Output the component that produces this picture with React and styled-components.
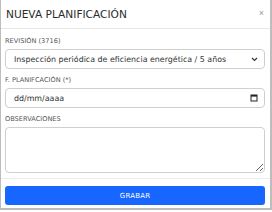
import React from "react";
import styled, { createGlobalStyle } from "styled-components";

const GlobalStyle = createGlobalStyle`
  * { box-sizing: border-box; }
  body {
    margin: 0;
    background: #ffffff;
    font-family: "DejaVu Sans", "Noto Sans", sans-serif;
    color: #333333;
  }
`;

const Modal = styled.div`
  width: 272px;
  height: 210px;
  border-left: 1px solid #bdbdbd;
  border-right: 2px solid #bdbdbd;
  border-bottom: 2px solid #bdbdbd;
  background: #fff;
  display: flex;
  flex-direction: column;
`;

const Header = styled.div`
  flex-shrink: 0;
  height: 29px;
  display: flex;
  align-items: center;
  justify-content: space-between;
  padding: 0 6px 1px 5px;
  border-bottom: 1px solid #e6e6e6;
`;

const Title = styled.h2`
  margin: 0;
  font-size: 10.6px;
  font-weight: 400;
  color: #2b2b2b;
`;

const Close = styled.button`
  border: none;
  background: none;
  padding: 0;
  font-size: 9px;
  color: #999;
  line-height: 1;
  cursor: pointer;
`;

const Body = styled.div`
  flex: 1;
  min-height: 0;
  padding: 8px 5px 0 4px;
  display: flex;
  flex-direction: column;
  border-bottom: 1px solid #ececec;
`;

const Field = styled.div`
  display: flex;
  flex-direction: column;
  margin-bottom: ${(p) => p.$gap ?? 7}px;
`;

const Label = styled.label`
  font-size: 6.6px;
  color: #555;
  margin-bottom: 4px;
`;

const Control = styled.div`
  height: 20px;
  border: 1px solid #cfcfcf;
  border-radius: 4px;
  display: flex;
  align-items: center;
  justify-content: space-between;
  padding: 0 6px 0 8px;
  font-size: 7.9px;
  color: #333;
`;

const TextArea = styled.textarea`
  height: 46px;
  border: 1px solid #cfcfcf;
  border-radius: 4px;
  resize: vertical;
  font-family: inherit;
  font-size: 9px;
  outline: none;
`;

const Footer = styled.div`
  flex-shrink: 0;
  padding: 7px 5px 3px 4px;
`;

const Button = styled.button`
  display: block;
  width: 100%;
  height: 19px;
  border: none;
  border-radius: 3px;
  background: #1766ff;
  color: #fff;
  font-family: inherit;
  font-size: 7px;
  letter-spacing: 0.2px;
`;

const Chevron = () => (
  <svg width="7" height="5" viewBox="0 0 7 5">
    <path d="M1 1l2.5 2.5L6 1" fill="none" stroke="#333" strokeWidth="1.2" />
  </svg>
);

const Calendar = () => (
  <svg width="8" height="8" viewBox="0 0 8 8">
    <rect x="1" y="1" width="6" height="6" fill="none" stroke="#222" strokeWidth="1" />
    <rect x="1" y="1" width="6" height="1.6" fill="#222" />
  </svg>
);

export default function App() {
  return (
    <>
      <GlobalStyle />
      <Modal>
        <Header>
          <Title>NUEVA PLANIFICACIÓN</Title>
          <Close>×</Close>
        </Header>
        <Body>
          <Field>
            <Label>REVISIÓN (3716)</Label>
            <Control>
              <span>Inspección periódica de eficiencia energética / 5 años</span>
              <Chevron />
            </Control>
          </Field>
          <Field>
            <Label>F. PLANIFCACIÓN (*)</Label>
            <Control>
              <span>dd/mm/aaaa</span>
              <Calendar />
            </Control>
          </Field>
          <Field $gap={0}>
            <Label>OBSERVACIONES</Label>
            <TextArea />
          </Field>
        </Body>
        <Footer>
          <Button>GRABAR</Button>
        </Footer>
      </Modal>
    </>
  );
}
